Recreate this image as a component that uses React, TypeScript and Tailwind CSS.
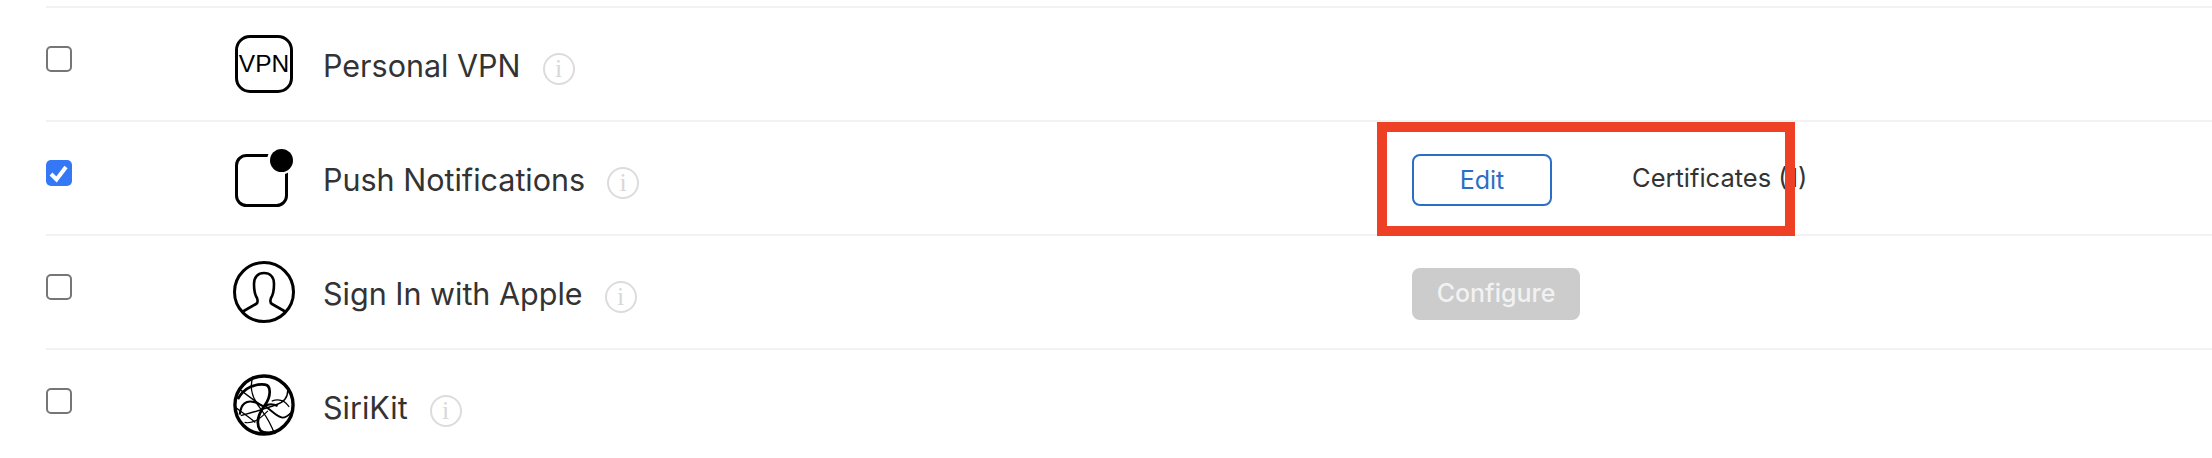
const InfoIcon = () => (
  <span className="ml-[22px] mt-[7px] flex h-[32px] w-[32px] shrink-0 items-center justify-center rounded-full border-2 border-[#dcdcdc] font-['Liberation_Serif',serif] text-[26px] leading-none text-[#d8d8d8]">
    i
  </span>
);

const Checkbox = ({ checked }: { checked?: boolean }) =>
  checked ? (
    <span className="mb-[12px] flex h-[26px] w-[26px] items-center justify-center rounded-[5px] bg-[#3478f6]">
      <svg viewBox="0 0 26 26" className="h-[26px] w-[26px]">
        <path d="M5 14l5.5 5.5L20 7" fill="none" stroke="#fff" strokeWidth="4" />
      </svg>
    </span>
  ) : (
    <span className="mb-[12px] block h-[26px] w-[26px] rounded-[5px] border-2 border-[#767676] bg-white" />
  );

const VpnIcon = () => (
  <div className="-mt-[2px] flex h-[58px] w-[58px] items-center justify-center rounded-[15px] border-[3px] border-black font-['Liberation_Sans',sans-serif] text-[24.5px] leading-none text-black">
    VPN
  </div>
);

const PushIcon = () => (
  <svg viewBox="0 0 62 62" className="h-[62px] w-[62px]">
    <rect x="3.5" y="7.5" width="50" height="50" rx="10" fill="none" stroke="#000" strokeWidth="3" />
    <circle cx="48" cy="12.5" r="14" fill="#fff" />
    <circle cx="48.5" cy="12.5" r="11.5" fill="#000" />
  </svg>
);

const AppleIcon = () => (
  <svg viewBox="0 0 62 62" className="-mt-[3px] h-[62px] w-[62px]">
    <circle cx="31" cy="31" r="29.5" fill="none" stroke="#000" strokeWidth="3" />
    <path
      d="M9 51l14-8c2-1 2-3 1-6-2-3-3-8-3-14 0-7 4-11 10-11s10 4 10 11c0 6-1 11-3 14-1 3-1 5 1 6l14 8"
      fill="none"
      stroke="#000"
      strokeWidth="2.6"
    />
  </svg>
);

const SiriIcon = () => (
  <svg viewBox="0 0 64 64" className="-mt-[5px] h-[64px] w-[64px]" fill="none" stroke="#000">
    <circle cx="32" cy="32" r="30" strokeWidth="3.5" />
    <path d="M5 26C12 13 24 10 33 11C40 12 39 24 33 32C27 40 23 50 28 58C31 61 38 61 44 60" strokeWidth="2.8" />
    <path d="M7 42C8 30 14 27 22 29C28 31 30 34 33 33C38 30 42 31 46 33" strokeWidth="2.2" />
    <path d="M33 33C40 38 46 45 51 45C56 45 59 41 62 38" strokeWidth="2" />
    <path d="M21 2C16 14 20 26 30 38C36 46 40 54 43 62" strokeWidth="1.3" />
    <path d="M56 12C58 22 54 29 44 32C32 36 20 40 8 43" strokeWidth="1.4" />
    <path d="M3 35C10 40 16 44 23 50" strokeWidth="1.4" />
    <path d="M6 15C14 22 22 27 30 33" strokeWidth="1.6" />
    <path d="M12 50C22 52 30 44 36 38" strokeWidth="1.2" />
    <path d="M40 28C48 25 54 28 58 34" strokeWidth="1.2" />
  </svg>
);

const rows = [
  { name: "Personal VPN", icon: <VpnIcon /> },
  { name: "Push Notifications", icon: <PushIcon />, checked: true, edit: true },
  { name: "Sign In with Apple", icon: <AppleIcon />, configure: true },
  { name: "SiriKit", icon: <SiriIcon /> },
];

export default function App() {
  return (
    <div className="relative h-[458px] w-[2212px] overflow-hidden bg-white pt-[6px] pl-[46px] font-['Inter',sans-serif] text-[#333]">
      {rows.map((row) => (
        <div key={row.name} className="grid h-[114px] grid-cols-[1366px_1fr] items-center border-t-2 border-[#f2f2f2] pt-[2px]">
          <div className="flex items-center">
            <div className="w-[187px] shrink-0">
              <Checkbox checked={row.checked} />
            </div>
            <div className="flex w-[62px] shrink-0 justify-center">{row.icon}</div>
            <span className="ml-[28px] pt-[2px] text-[30.5px] whitespace-nowrap">{row.name}</span>
            <InfoIcon />
          </div>
          <div className="flex items-center">
            {row.edit && (
              <>
                <button className="mt-[2px] h-[52px] w-[140px] rounded-[8px] border-2 border-[#2a6fc4] bg-white pt-[1px] text-[25px] text-[#2a6fc4]">
                  Edit
                </button>
                <span className="mb-[2px] ml-[80px] text-[25.5px] leading-[30px] whitespace-nowrap">Certificates (1)</span>
              </>
            )}
            {row.configure && (
              <button className="mt-[2px] h-[52px] w-[168px] rounded-[8px] bg-[#cccccc] text-[25px] font-medium text-[#f2f2f2]">
                Configure
              </button>
            )}
          </div>
        </div>
      ))}
      {/* red highlight drawn over the screenshot */}
      <div className="absolute left-[1377px] top-[122px] h-[114px] w-[418px] border-[10px] border-[#ee4025]" />
    </div>
  );
}
